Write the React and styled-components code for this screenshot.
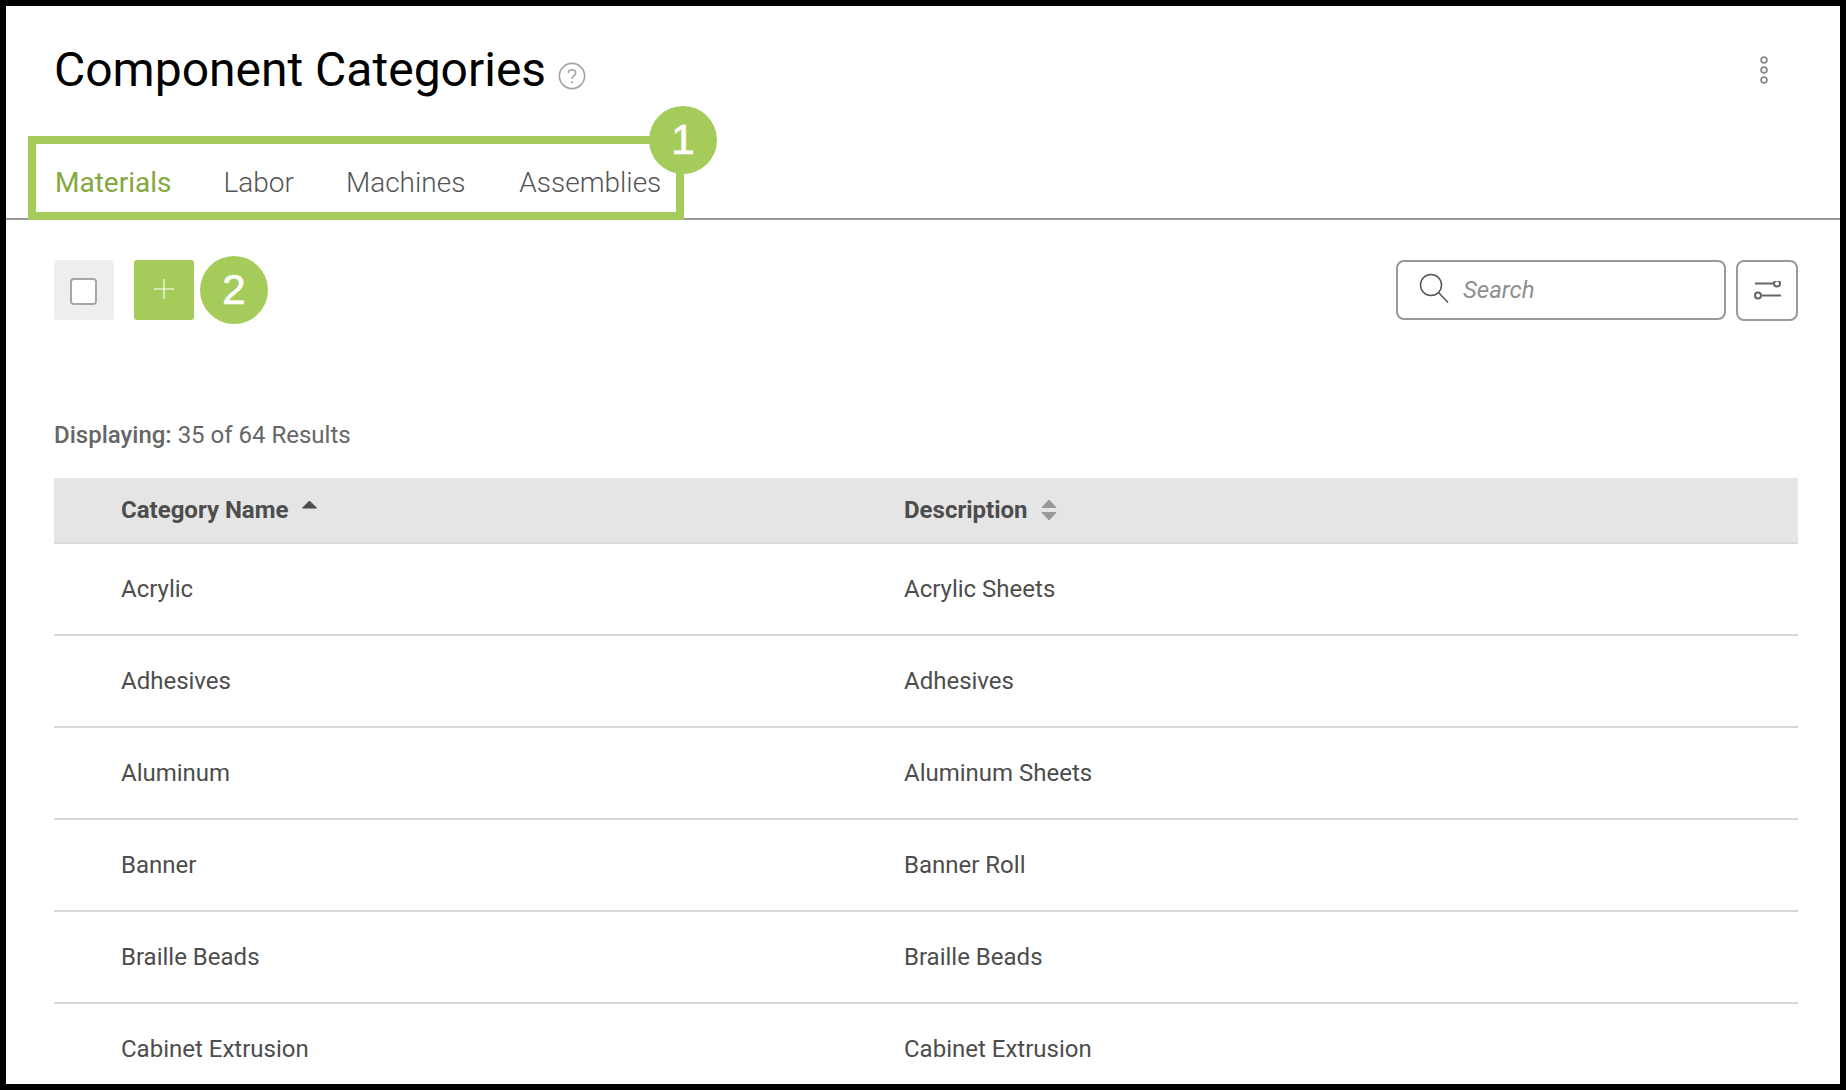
import React from "react";
import styled, { createGlobalStyle } from "styled-components";

const Global = createGlobalStyle`
  html, body { margin: 0; padding: 0; background: #000; }
  body { font-family: Roboto, "Liberation Sans", sans-serif; overflow: hidden; }
  * { box-sizing: border-box; }
`;

const green = "#a5cb5a";

const Frame = styled.div`
  width: 1846px;
  height: 1090px;
  border: 6px solid #000;
  background: #fdfdfd;
  overflow: hidden;
`;
const Header = styled.header`
  position: relative;
  border-bottom: 2px solid #999;
  background: #fff;
  height: 214px;
  padding: 0 42px 0 48px;
  display: flex;
  flex-direction: column;
  justify-content: space-between;
`;
const TitleRow = styled.div`
  display: flex;
  align-items: center;
  height: 100px;
  padding-top: 26px;
`;
const Title = styled.h1`
  margin: 2px 0 0;
  font-size: 48px;
  font-weight: 400;
  color: #000;
  line-height: 60px;
`;
const HelpIcon = styled.svg`
  width: 28px;
  height: 28px;
  margin: 14px 0 0 12px;
`;
const KebabButton = styled.button`
  margin-left: auto;
  margin-right: 22px;
  width: 24px;
  height: 32px;
  padding: 0;
  border: 0;
  background: none;
  display: flex;
  align-items: center;
  justify-content: center;
  margin-top: 2px;
`;
const Tabs = styled.nav`
  display: flex;
  align-items: baseline;
  height: 62px;
  padding-top: 7px;
`;
const Tab = styled.span`
  font-size: 28px;
  font-weight: ${(p) => (p.$active ? 400 : 300)};
  line-height: 40px;
  color: ${(p) => (p.$active ? "#84a83d" : "#555")};
  margin-left: ${(p) => p.$gap}px;
`;
const Highlight = styled.div`
  position: absolute;
  left: 22px;
  top: 130px;
  width: 656px;
  height: 84px;
  border: 8px solid ${green};
  pointer-events: none;
`;
const Badge = styled.div`
  position: absolute;
  width: 68px;
  height: 68px;
  border-radius: 50%;
  background: ${green};
  color: #fff;
  font-family: "Liberation Sans", Arial, sans-serif;
  font-size: 42px;
  line-height: 68px;
  text-align: center;
  -webkit-text-stroke: 0.7px #fff;
  left: ${(p) => p.$left}px;
  top: ${(p) => p.$top}px;
`;
const Main = styled.main`
  padding: 40px 42px 0 48px;
  background: #fff;
`;
const Toolbar = styled.div`
  position: relative;
  display: flex;
  align-items: flex-start;
  height: 61px;
`;
const SelectAll = styled.div`
  width: 60px;
  height: 60px;
  border-radius: 3px;
  background: #eee;
  display: flex;
  align-items: center;
  justify-content: center;
  padding-right: 2px;
  padding-top: 2px;
`;
const Check = styled.span`
  width: 27px;
  height: 27px;
  border: 2px solid #a6a6a6;
  border-radius: 4px;
  background: #fff;
`;
const AddButton = styled.button`
  width: 60px;
  height: 60px;
  margin-left: 20px;
  padding: 0 0 2px;
  border: 0;
  border-radius: 3px;
  background: ${green};
  display: flex;
  align-items: center;
  justify-content: center;
`;
const SearchBox = styled.div`
  margin-left: auto;
  width: 330px;
  height: 60px;
  border: 2px solid #999;
  border-radius: 8px;
  background: #fff;
  display: flex;
  align-items: center;
  padding-left: 21px;
`;
const SearchText = styled.span`
  margin-left: 12px;
  font-size: 24px;
  font-style: italic;
  color: #8f8f8f;
`;
const FilterButton = styled.button`
  width: 62px;
  height: 61px;
  margin-left: 10px;
  padding: 0;
  border: 2px solid #999;
  border-radius: 8px;
  background: #fff;
  display: flex;
  align-items: center;
  justify-content: center;
`;
const Results = styled.div`
  margin-top: 96px;
  height: 36px;
  font-size: 24px;
  line-height: 36px;
  color: #666;
`;
const ResultsLabel = styled.span`
  font-weight: 500;
`;
const Table = styled.div`
  margin-top: 25px;
`;
const HeadRow = styled.div`
  display: grid;
  grid-template-columns: 783px 1fr;
  height: 66px;
  padding-left: 67px;
  align-items: center;
  background: #e5e5e5;
  border-bottom: 2px solid #d9d9d9;
`;
const HeadCell = styled.div`
  display: flex;
  align-items: center;
  font-size: 24px;
  font-weight: 700;
  color: #4d4d4d;
`;
const SortIcon = styled.svg`
  margin-left: ${(p) => p.$gap}px;
  margin-top: ${(p) => p.$lift || 0}px;
  display: block;
`;
const Row = styled.div`
  display: grid;
  grid-template-columns: 783px 1fr;
  height: 92px;
  padding-left: 67px;
  align-items: center;
  font-size: 24px;
  color: #4d4d4d;
  border-bottom: 2px solid #d9d9d9;
  background: #fff;
`;

const rows = [
  ["Acrylic", "Acrylic Sheets"],
  ["Adhesives", "Adhesives"],
  ["Aluminum", "Aluminum Sheets"],
  ["Banner", "Banner Roll"],
  ["Braille Beads", "Braille Beads"],
  ["Cabinet Extrusion", "Cabinet Extrusion"],
];

export default function App() {
  return (
    <Frame>
      <Global />
      <Header>
        <TitleRow>
          <Title>Component Categories</Title>
          <HelpIcon viewBox="0 0 28 28" fill="none">
            <circle cx="14" cy="14" r="12.6" stroke="#a3a3a3" strokeWidth="1.6" />
            <path d="M10.4 11.2c0-2.2 1.6-3.5 3.7-3.5s3.6 1.3 3.6 3.2c0 2.9-3.6 2.9-3.6 5.8" stroke="#a3a3a3" strokeWidth="1.6" />
            <circle cx="14.1" cy="20" r="1.1" fill="#a3a3a3" />
          </HelpIcon>
          <KebabButton aria-label="More">
            <svg width="10" height="28" viewBox="0 0 10 28" fill="none" stroke="#8a8a8a" strokeWidth="1.8">
              <circle cx="5" cy="4" r="2.9" />
              <circle cx="5" cy="14" r="2.9" />
              <circle cx="5" cy="24" r="2.9" />
            </svg>
          </KebabButton>
        </TitleRow>
        <Tabs>
          <Tab $active $gap={1}>Materials</Tab>
          <Tab $gap={52}>Labor</Tab>
          <Tab $gap={52}>Machines</Tab>
          <Tab $gap={54}>Assemblies</Tab>
        </Tabs>
        <Highlight />
        <Badge $left={643} $top={100}>1</Badge>
      </Header>
      <Main>
        <Toolbar>
          <SelectAll><Check /></SelectAll>
          <AddButton aria-label="Add">
            <svg width="20" height="20" viewBox="0 0 20 20" stroke="#fff" strokeWidth="1.1">
              <path d="M10 0v20M0 10h20" />
            </svg>
          </AddButton>
          <Badge $left={146} $top={-4}>2</Badge>
          <SearchBox>
            <svg width="32" height="34" viewBox="0 0 32 34" fill="none" stroke="#555" strokeWidth="1.5">
              <circle cx="12" cy="12" r="10.5" />
              <path d="M19.5 19.5L29 29.5" />
            </svg>
            <SearchText>Search</SearchText>
          </SearchBox>
          <FilterButton aria-label="Filter">
            <svg width="30" height="20" viewBox="-1 1.5 30 20" fill="none" stroke="#666" strokeWidth="2">
              <path d="M2 4h18M9 16h19" />
              <circle cx="24" cy="4" r="3" />
              <circle cx="5" cy="16" r="3" />
            </svg>
          </FilterButton>
        </Toolbar>
        <Results><ResultsLabel>Displaying:</ResultsLabel> 35 of 64 Results</Results>
        <Table>
          <HeadRow>
            <HeadCell>
              Category Name
              <SortIcon $gap={14} $lift={-4} width="15" height="16" viewBox="0 0 15 16" fill="#4d4d4d">
                <path d="M7.5 1L14.5 8H.5z" stroke="#4d4d4d" strokeLinejoin="round" />
              </SortIcon>
            </HeadCell>
            <HeadCell>
              Description
              <SortIcon $gap={13} width="16" height="22" viewBox="0 0 16 22" fill="#999" stroke="#999" strokeLinejoin="round">
                <path d="M8 1L15 8.5H1zM8 21L15 13.5H1z" />
              </SortIcon>
            </HeadCell>
          </HeadRow>
          {rows.map(([a, b]) => (
            <Row key={a}>
              <div>{a}</div>
              <div>{b}</div>
            </Row>
          ))}
        </Table>
      </Main>
    </Frame>
  );
}
